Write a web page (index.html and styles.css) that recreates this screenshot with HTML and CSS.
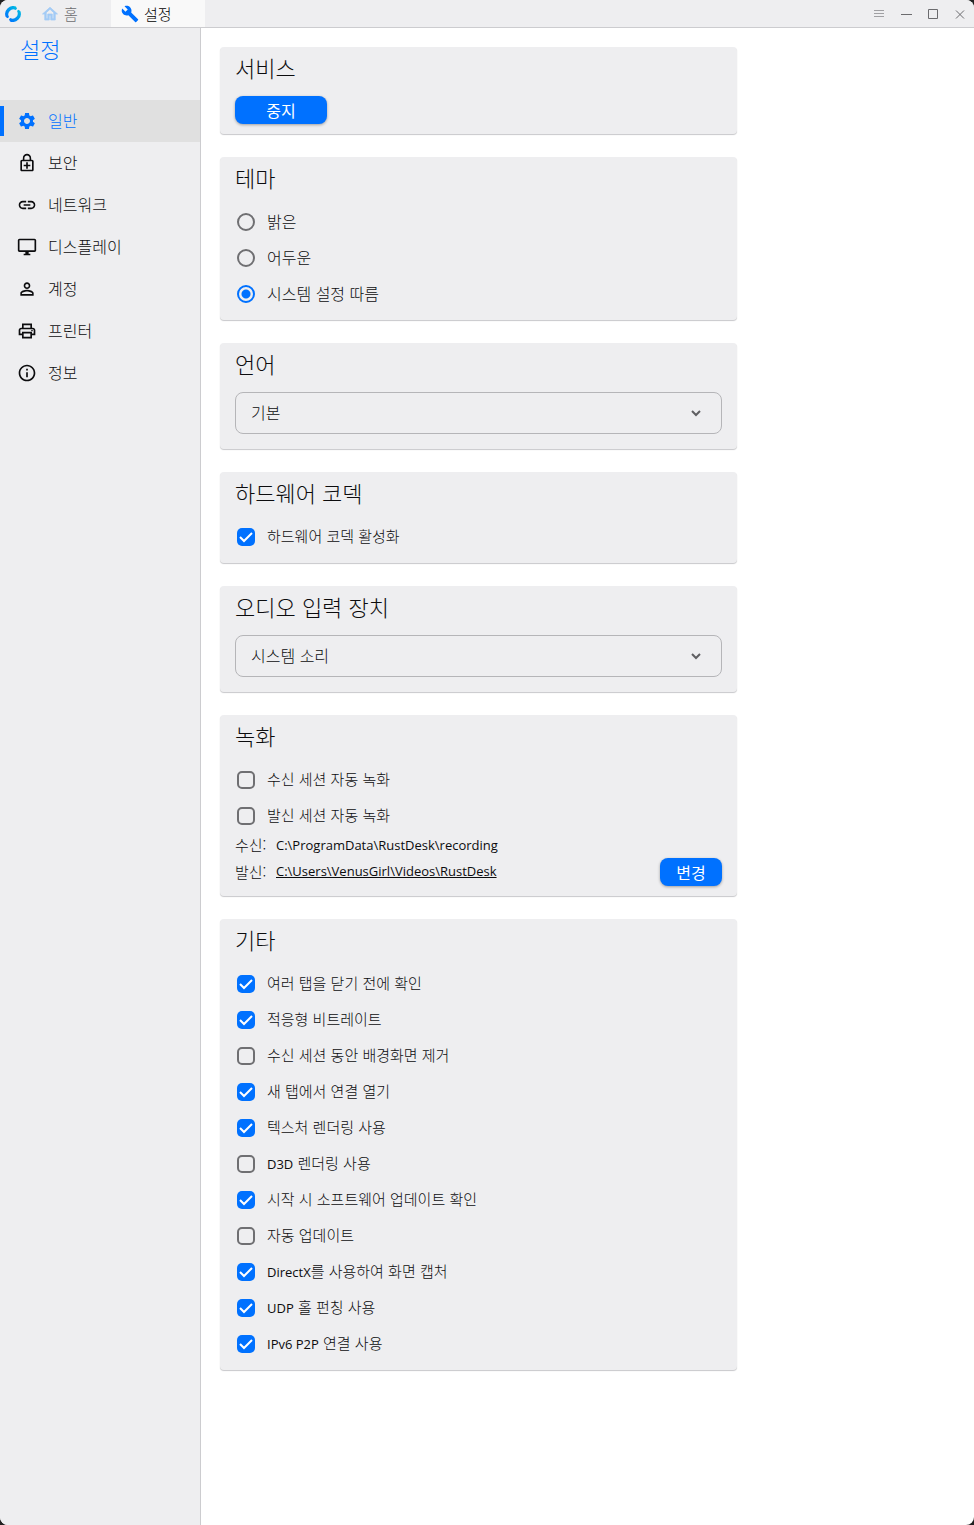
FILE: index.html
```html
<!DOCTYPE html>
<html lang="ko">
<head>
<meta charset="utf-8">
<meta name="viewport" content="width=device-width, initial-scale=1">
<title>설정</title>
<link rel="stylesheet" href="styles.css">
</head>
<body>
<div class="window">
  <header class="titlebar">
    <svg class="logo" viewBox="0 0 16 16" aria-hidden="true">
      <defs><linearGradient id="ring" x1="0" y1="1" x2="1" y2="0"><stop offset="0" stop-color="#0071ff"/><stop offset="1" stop-color="#00bfe1"/></linearGradient></defs>
      <path fill="url(#ring)" d="M11 .6A8 8 0 0 0 .7 11l2 1.2 1.3-1.3A5 5 0 0 1 10.7 4L12 2.700z"/>
      <path fill="url(#ring)" d="M5 15.400A8 8 0 0 0 15.300 5l-2-1.200L12 5.100A5 5 0 0 1 5.300 12L4 13.300z"/>
    </svg>
    <nav class="tabs">
      <a class="tab" href="#home">
        <svg class="tab-icon home" viewBox="0 0 24 24" aria-hidden="true"><path d="M12 5.690l5 4.500V18h-2v-6H9v6H7v-7.810l5-4.500M12 3L2 12h3v8h6v-6h2v6h6v-8h3L12 3z"/></svg>홈</a>
      <a class="tab active" href="#settings">
        <svg class="tab-icon" viewBox="0 0 24 24" aria-hidden="true"><path d="M22.700 19l-9.100-9.100c.9-2.300.4-5-1.500-6.900-2-2-5-2.400-7.400-1.300L9 6 6 9 1.600 4.700C.4 7.100.9 10.100 2.900 12.100c1.900 1.900 4.600 2.400 6.900 1.500l9.100 9.100c.4.4 1 .4 1.400 0l2.300-2.300c.5-.4.5-1.100.1-1.400z"/></svg>설정</a>
    </nav>
    <div class="controls">
      <button class="control pale" aria-label="메뉴"><svg viewBox="0 0 12 12"><path d="M1 2.500h10M1 5.500h10M1 8.500h10"/></svg></button>
      <button class="control" aria-label="최소화"><svg viewBox="0 0 12 12"><path d="M1 6.500h11"/></svg></button>
      <button class="control" aria-label="최대화"><svg viewBox="0 0 12 12"><path d="M1.500 1.500h9v9h-9z"/></svg></button>
      <button class="control" aria-label="닫기"><svg viewBox="0 0 12 12"><path d="M2 2.500l8 8M10 2.500l-8 8"/></svg></button>
    </div>
  </header>

  <div class="body">
    <aside class="sidebar">
      <h1 class="page-title">설정</h1>
      <nav class="menu">
        <a class="menu-item current" href="#general"><svg viewBox="0 0 24 24" aria-hidden="true"><path d="M19.140 12.940c.04-.3.06-.61.06-.94 0-.32-.02-.64-.07-.94l2.030-1.580c.18-.14.23-.41.12-.61l-1.920-3.320c-.12-.22-.37-.29-.59-.22l-2.390.96c-.5-.38-1.030-.7-1.620-.94l-.36-2.540c-.04-.24-.24-.41-.48-.41h-3.840c-.24 0-.43.17-.47.41l-.36 2.540c-.59.24-1.130.57-1.620.94l-2.390-.96c-.22-.08-.47 0-.59.22L2.740 8.870c-.12.21-.08.47.12.61l2.030 1.580c-.05.3-.09.63-.09.94s.02.64.07.94l-2.030 1.580c-.18.14-.23.41-.12.61l1.920 3.320c.12.22.37.29.59.22l2.390-.96c.5.38 1.030.7 1.620.94l.36 2.540c.05.24.24.41.48.41h3.840c.24 0 .44-.17.47-.41l.36-2.540c.59-.24 1.130-.56 1.620-.94l2.390.96c.22.08.47 0 .59-.22l1.920-3.320c.12-.22.07-.47-.12-.61l-2.010-1.580zM12 15.600c-1.980 0-3.600-1.620-3.600-3.600s1.620-3.600 3.600-3.600 3.600 1.620 3.600 3.600-1.620 3.600-3.600 3.600z"/></svg>일반</a>
        <a class="menu-item" href="#security"><svg viewBox="0 0 24 24" aria-hidden="true"><path d="M18 8h-1V6c0-2.760-2.240-5-5-5S7 3.240 7 6v2H6c-1.100 0-2 .9-2 2v10c0 1.100.9 2 2 2h12c1.100 0 2-.9 2-2V10c0-1.100-.9-2-2-2zM8.900 6c0-1.710 1.390-3.100 3.100-3.100s3.100 1.390 3.100 3.100v2H8.900V6zM18 20H6V10h12v10zm-7-1h2v-3h3v-2h-3v-3h-2v3H8v2h3z"/></svg>보안</a>
        <a class="menu-item" href="#network"><svg viewBox="0 0 24 24" aria-hidden="true"><path d="M3.900 12c0-1.710 1.390-3.100 3.100-3.100h4V7H7c-2.760 0-5 2.240-5 5s2.240 5 5 5h4v-1.900H7c-1.710 0-3.100-1.390-3.100-3.100zM8 13h8v-2H8v2zm9-6h-4v1.900h4c1.710 0 3.100 1.390 3.100 3.100s-1.390 3.100-3.100 3.100h-4V17h4c2.760 0 5-2.240 5-5s-2.240-5-5-5z"/></svg>네트워크</a>
        <a class="menu-item" href="#display"><svg viewBox="0 0 24 24" aria-hidden="true"><path d="M21 2H3c-1.100 0-2 .9-2 2v12c0 1.100.9 2 2 2h7v2H8v2h8v-2h-2v-2h7c1.100 0 2-.9 2-2V4c0-1.100-.9-2-2-2zm0 14H3V4h18v12z"/></svg>디스플레이</a>
        <a class="menu-item" href="#account"><svg viewBox="0 0 24 24" aria-hidden="true"><path d="M12 5.900a2.100 2.100 0 1 1 0 4.200 2.100 2.100 0 0 1 0-4.200m0 9c2.970 0 6.100 1.460 6.100 2.100v1.100H5.900V17c0-.64 3.130-2.100 6.100-2.100M12 4C9.790 4 8 5.790 8 8s1.790 4 4 4 4-1.790 4-4-1.790-4-4-4zm0 9c-2.670 0-8 1.340-8 4v3h16v-3c0-2.660-5.330-4-8-4z"/></svg>계정</a>
        <a class="menu-item" href="#printer"><svg viewBox="0 0 24 24" aria-hidden="true"><path d="M19 8h-1V3H6v5H5c-1.660 0-3 1.340-3 3v6h4v4h12v-4h4v-6c0-1.660-1.340-3-3-3zM8 5h8v3H8V5zm8 12v2H8v-4h8v2zm2-2v-2H6v2H4v-4c0-.55.45-1 1-1h14c.55 0 1 .45 1 1v4h-2z"/><circle cx="18" cy="11.500" r="1"/></svg>프린터</a>
        <a class="menu-item" href="#about"><svg viewBox="0 0 24 24" aria-hidden="true"><path d="M11 7h2v2h-2zm0 4h2v6h-2zm1-9C6.480 2 2 6.480 2 12s4.480 10 10 10 10-4.480 10-10S17.520 2 12 2zm0 18c-4.410 0-8-3.590-8-8s3.590-8 8-8 8 3.590 8 8-3.590 8-8 8z"/></svg>정보</a>
      </nav>
    </aside>

    <main class="content">
      <section class="card action">
        <h2>서비스</h2>
        <button class="button wide">중지</button>
      </section>

      <section class="card">
        <h2>테마</h2>
        <label class="option theme"><input type="radio" name="theme">밝은</label>
        <label class="option theme"><input type="radio" name="theme">어두운</label>
        <label class="option theme"><input type="radio" name="theme" checked>시스템 설정 따름</label>
      </section>

      <section class="card picker">
        <h2 id="language">언어</h2>
        <div class="select">
          <select aria-labelledby="language"><option>기본</option></select>
          <svg viewBox="0 0 12 12" aria-hidden="true"><path d="M2 4l4 4 4-4"/></svg>
        </div>
      </section>

      <section class="card">
        <h2>하드웨어 코덱</h2>
        <label class="option"><input type="checkbox" checked>하드웨어 코덱 활성화</label>
      </section>

      <section class="card picker">
        <h2 id="audio">오디오 입력 장치</h2>
        <div class="select">
          <select aria-labelledby="audio"><option>시스템 소리</option></select>
          <svg viewBox="0 0 12 12" aria-hidden="true"><path d="M2 4l4 4 4-4"/></svg>
        </div>
      </section>

      <section class="card recording">
        <h2>녹화</h2>
        <label class="option"><input type="checkbox">수신 세션 자동 녹화</label>
        <label class="option"><input type="checkbox">발신 세션 자동 녹화</label>
        <div class="path-row"><span class="path-label">수신:</span><span class="latin">C:\ProgramData\RustDesk\recording</span></div>
        <div class="path-row last"><span class="path-label">발신:</span><a class="latin" href="#videos">C:\Users\VenusGirl\Videos\RustDesk</a><button class="button">변경</button></div>
      </section>

      <section class="card">
        <h2>기타</h2>
        <label class="option"><input type="checkbox" checked>여러 탭을 닫기 전에 확인</label>
        <label class="option"><input type="checkbox" checked>적응형 비트레이트</label>
        <label class="option"><input type="checkbox">수신 세션 동안 배경화면 제거</label>
        <label class="option"><input type="checkbox" checked>새 탭에서 연결 열기</label>
        <label class="option"><input type="checkbox" checked>텍스처 렌더링 사용</label>
        <label class="option"><input type="checkbox"><span><span class="latin">D3D</span> 렌더링 사용</span></label>
        <label class="option"><input type="checkbox" checked>시작 시 소프트웨어 업데이트 확인</label>
        <label class="option"><input type="checkbox">자동 업데이트</label>
        <label class="option"><input type="checkbox" checked><span><span class="latin">DirectX</span>를 사용하여 화면 캡처</span></label>
        <label class="option"><input type="checkbox" checked><span><span class="latin">UDP</span> 홀 펀칭 사용</span></label>
        <label class="option"><input type="checkbox" checked><span><span class="latin">IPv6 P2P</span> 연결 사용</span></label>
      </section>
    </main>
  </div>
</div>
</body>
</html>
```
FILE: styles.css
```css
:root {
  --accent: #0071ff;
  --panel: #eeeef0;
  --line: #cccccf;
  --ink: #0c0c0e;
  --muted: #6f6f72;
}

* { box-sizing: border-box; }

body {
  margin: 0;
  background: #222;
  color: var(--ink);
  font-family: "Noto Sans CJK KR", sans-serif;
  font-size: 15px;
  font-weight: 300;
}

a { color: inherit; text-decoration: none; }
button, select { font: inherit; color: inherit; }

.window {
  display: flex;
  flex-direction: column;
  min-height: 100vh;
  overflow: hidden;
  border-radius: 8px;
  background: #fff;
}

.titlebar {
  display: flex;
  align-items: center;
  height: 28px;
  padding: 0 1px 0 5px;
  border-bottom: 1px solid var(--line);
  background: var(--panel);
}

.logo { width: 16px; height: 16px; }
.tabs { display: flex; align-self: stretch; margin-left: 10px; }

.tab {
  display: flex;
  align-items: center;
  gap: 5px;
  width: 94px;
  padding-left: 10px;
  color: #6b6b6e;
}

.tab:first-child { width: 80px; }
.tab.active { background: #f9f9f9; color: #000; }
.tab-icon { width: 18px; height: 18px; fill: var(--accent); }
.tab-icon.home { fill: #a3cbf5; stroke: #a3cbf5; }
.controls { display: flex; margin-left: auto; }

.control {
  display: grid;
  place-items: center;
  width: 27px;
  height: 27px;
  padding: 0;
  border: 0;
  background: none;
}

.control svg { width: 12px; height: 12px; fill: none; stroke: #6b6b6e; }
.control.pale svg { stroke: #a0a0a3; }

.body { display: flex; flex: 1; }

.sidebar {
  flex: 0 0 201px;
  border-right: 1px solid var(--line);
  background: var(--panel);
}

.page-title {
  height: 72px;
  margin: 0;
  padding: 5px 20px;
  color: var(--accent);
  font-size: 22px;
  font-weight: 300;
  line-height: 30px;
}

.menu-item {
  display: flex;
  align-items: center;
  height: 42px;
  padding: 0 0 2px 17px;
  font-size: 16px;
}

.menu-item svg {
  width: 20px;
  height: 20px;
  margin: 2px 11px 0 0;
  fill: currentColor;
}

.menu-item.current {
  padding-left: 0;
  background: #e0e0e0;
  color: var(--accent);
}

.menu-item.current::before {
  content: "";
  width: 4px;
  height: 30px;
  margin: 2px 13px 0 0;
  background: var(--accent);
}

.content {
  display: flex;
  flex: 1;
  flex-direction: column;
  gap: 23px;
  padding: 19px;
}

.card {
  width: 100%;
  max-width: 517px;
  padding: 0 15px 8px;
  border-radius: 4px;
  background: var(--panel);
  box-shadow: 0 1px 1px #c8c8cb;
}

.card.action, .card.recording { padding-bottom: 10px; }
.card.picker { padding-bottom: 15px; }

.card h2 {
  margin: 0;
  padding: 5px 0 12px;
  font-size: 22px;
  font-weight: 300;
  line-height: 30px;
}

.card.action h2, .card.picker h2 { padding-bottom: 14px; }

.button {
  display: block;
  min-width: 62px;
  height: 28px;
  padding: 0 15px;
  border: 0;
  border-radius: 8px;
  background: var(--accent);
  box-shadow: 0 1px 3px #0005;
  color: #fff;
  font-size: 16px;
  font-weight: 400;
  line-height: 28px;
}

.button.wide { min-width: 92px; }

.option {
  display: flex;
  align-items: center;
  gap: 12px;
  height: 36px;
  padding: 0 0 3px 2px;
}

.option.theme { font-size: 16px; }

.option input {
  appearance: none;
  width: 18px;
  height: 18px;
  margin: 3px 0 0;
  border: 2px solid var(--muted);
  border-radius: 5px;
}

.option input[type="radio"] { border-radius: 50%; }

.option input[type="radio"]:checked {
  border-color: var(--accent);
  background: radial-gradient(circle, var(--accent) 4px, transparent 5px);
}

.option input[type="checkbox"]:checked {
  border: 0;
  background: var(--accent) url("data:image/svg+xml,%3Csvg xmlns='http://www.w3.org/2000/svg' viewBox='0 0 18 18'%3E%3Cpath d='M3 9l4 4 8-8' fill='none' stroke='white' stroke-width='2'/%3E%3C/svg%3E");
}

.select { display: grid; align-items: center; }
.select select, .select svg { grid-area: 1 / 1; }

.select select {
  appearance: none;
  width: 100%;
  height: 42px;
  padding: 0 15px 2px;
  border: 1px solid #b5b5b8;
  border-radius: 8px;
  background: none;
  font-size: 16px;
}

.select svg {
  justify-self: end;
  width: 12px;
  height: 12px;
  margin-right: 20px;
  fill: none;
  stroke: #5f5f62;
  stroke-width: 2;
  pointer-events: none;
}

.path-row { display: flex; align-items: center; height: 24px; padding-bottom: 3px; }
.path-row.last { height: 28px; padding-bottom: 2px; }
.path-label { width: 41px; }
.path-row .button { margin: 2px 0 0 auto; }

.latin {
  font-family: "Open Sans", "Noto Sans CJK KR", sans-serif;
  font-size: 13px;
  font-weight: 400;
}

a.latin { text-decoration: underline; }
```
